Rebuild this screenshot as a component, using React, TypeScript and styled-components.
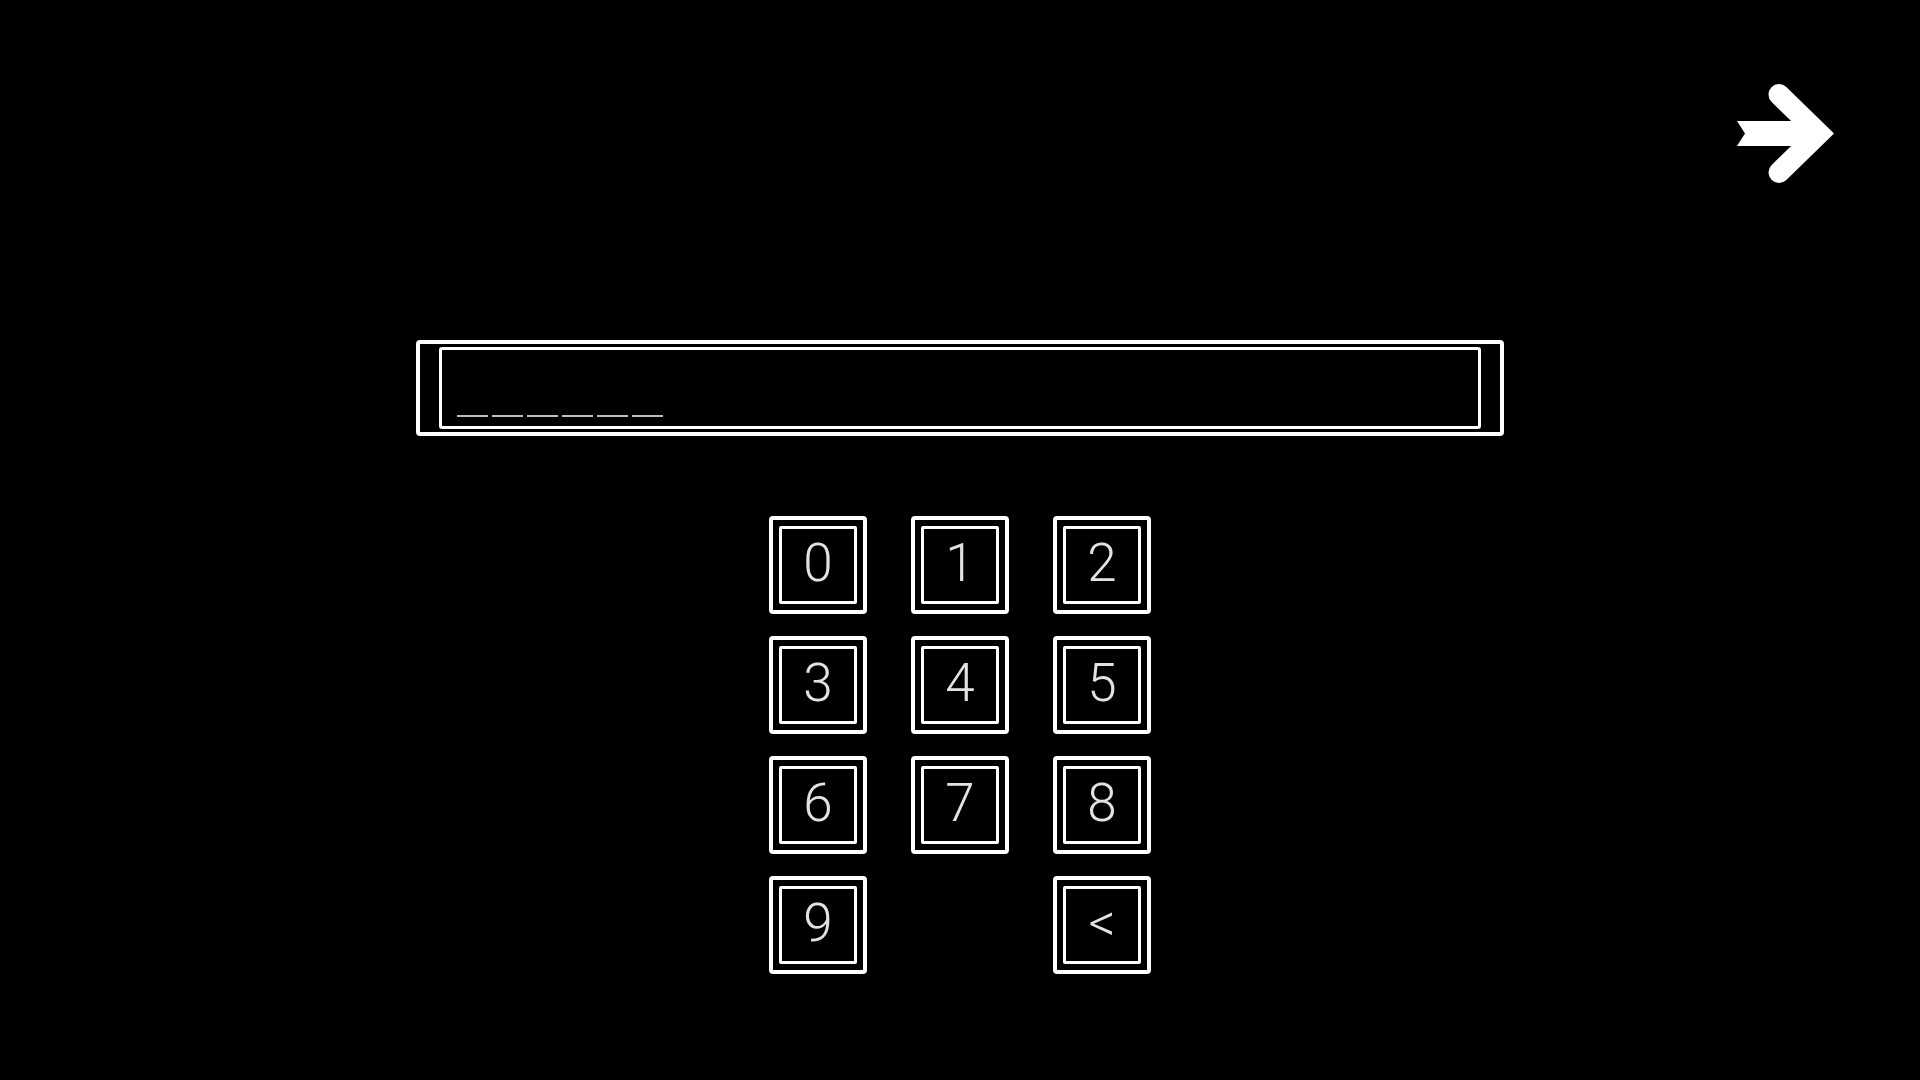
import React from "react";
import styled, { createGlobalStyle } from "styled-components";

const GlobalStyle = createGlobalStyle`
  html, body {
    margin: 0;
    padding: 0;
    background: #000;
  }
  #root {
    min-height: 100vh;
  }
  * {
    box-sizing: border-box;
  }
`;

const Page = styled.main`
  min-height: 100vh;
  display: flex;
  flex-direction: column;
  align-items: center;
  background: #000;
  font-family: Roboto, "Liberation Sans", sans-serif;
`;

const TopBar = styled.header`
  align-self: stretch;
  display: flex;
  justify-content: flex-end;
  padding: 83px 83px 0 0;
`;

const NextButton = styled.button`
  width: 100px;
  height: 100px;
  padding: 0;
  border: 0;
  background: none;
  cursor: pointer;
  display: block;

  svg {
    display: block;
  }
`;

const CodeDisplay = styled.div`
  margin-top: 157px;
  width: 1088px;
  height: 96px;
  border: 4px solid #fff;
  border-radius: 4px;
  padding: 3px 19px;
`;

const CodeField = styled.div`
  height: 100%;
  border: 3px solid #fff;
  border-radius: 3px;
  display: flex;
  align-items: flex-end;
  gap: 4px;
  padding: 0 0 9px 15px;
`;

const Slot = styled.span<{ $filled?: boolean }>`
  width: 31px;
  height: 2px;
  background: ${(p) => (p.$filled ? "#fff" : "#bdbdbd")};
`;

const Keypad = styled.div`
  margin-top: 80px;
  display: grid;
  grid-template-columns: repeat(3, 98px);
  grid-auto-rows: 98px;
  column-gap: 44px;
  row-gap: 22px;
`;

const Key = styled.button<{ $col?: number }>`
  grid-column: ${(p) => (p.$col ? p.$col : "auto")};
  width: 98px;
  height: 98px;
  padding: 6px;
  border: 4px solid #fff;
  border-radius: 4px;
  background: #000;
  cursor: pointer;
`;

const KeyFace = styled.span`
  width: 100%;
  height: 100%;
  display: flex;
  align-items: center;
  justify-content: center;
  border: 3px solid #fff;
  border-radius: 2px;
  color: #e2e2e2;
  font-family: Roboto, "Liberation Sans", sans-serif;
  font-weight: 300;
  font-size: 53px;
  line-height: 1;
  padding-bottom: 3px;
`;

const ArrowIcon = () => (
  <svg width="100" height="100" viewBox="0 0 100 100">
    <path d="M0 38 H78 V63 H0 L8 50.5 Z" fill="#fff" />
    <path
      d="M42 11.5 L82 50.5 L42 89.5"
      fill="none"
      stroke="#fff"
      strokeWidth="21"
      strokeLinecap="round"
      strokeLinejoin="miter"
    />
  </svg>
);

const keys: { label: string; col?: number }[] = [
  { label: "0" },
  { label: "1" },
  { label: "2" },
  { label: "3" },
  { label: "4" },
  { label: "5" },
  { label: "6" },
  { label: "7" },
  { label: "8" },
  { label: "9" },
  { label: "<", col: 3 },
];

export default function App() {
  const [code, setCode] = React.useState("");

  const press = (label: string) => {
    if (label === "<") setCode((c) => c.slice(0, -1));
    else setCode((c) => (c.length < 6 ? c + label : c));
  };

  return (
    <>
      <GlobalStyle />
      <Page>
        <TopBar>
          <NextButton aria-label="Next">
            <ArrowIcon />
          </NextButton>
        </TopBar>
        <CodeDisplay>
          <CodeField>
            {Array.from({ length: 6 }, (_, i) => (
              <Slot key={i} $filled={i < code.length} />
            ))}
          </CodeField>
        </CodeDisplay>
        <Keypad>
          {keys.map((k) => (
            <Key key={k.label} $col={k.col} onClick={() => press(k.label)}>
              <KeyFace>{k.label}</KeyFace>
            </Key>
          ))}
        </Keypad>
      </Page>
    </>
  );
}
